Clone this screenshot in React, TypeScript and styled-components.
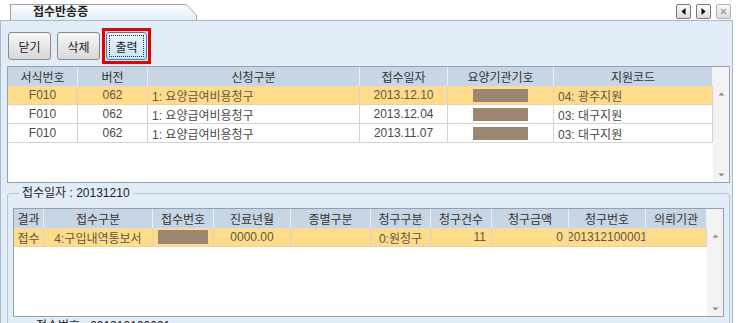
import React from 'react';
import styled, { createGlobalStyle } from 'styled-components';

const GlobalStyle = createGlobalStyle`
  html, body { margin: 0; padding: 0; background: #fff; }
  body {
    font-family: "Liberation Sans", "Noto Sans CJK KR", sans-serif;
    font-size: 12px;
    color: #333;
  }
  * { box-sizing: border-box; }
`;

const Screen = styled.div`
  width: 740px;
  height: 323px;
  overflow: hidden;
  background: #fff;
  display: flex;
  flex-direction: column;
`;

const TabStrip = styled.div`
  height: 20px;
  flex-shrink: 0;
  display: flex;
  align-items: flex-start;
  justify-content: space-between;
  padding: 4px 9px 0 10px;
`;

const TabOuter = styled.div`
  width: 187px;
  height: 16px;
  padding: 1px 1px 0 1px;
  background: #a3a3a3;
  clip-path: polygon(0 0, 176px 0, 187px 11px, 187px 100%, 0 100%);
`;

const TabInner = styled.div`
  height: 100%;
  background: linear-gradient(#fdfeff, #e4edf7);
  clip-path: polygon(0 0, 175px 0, 185px 10px, 185px 100%, 0 100%);
  padding-left: 22px;
  font-size: 12px;
  line-height: 15px;
  font-weight: bold;
  color: #222;
`;

const NavGroup = styled.div`
  display: flex;
  gap: 5px;
`;

const NavButton = styled.div<{ $disabled?: boolean }>`
  width: 15px;
  height: 15px;
  border: 1px solid ${p => (p.$disabled ? '#b0b0b0' : '#7a7a7a')};
  border-radius: 2px;
  background: linear-gradient(#fbfbfb, #dcdcdc);
  display: flex;
  align-items: center;
  justify-content: center;
`;

const Panel = styled.div`
  flex: 1;
  min-height: 0;
  margin-right: 7px;
  background: #e3edf7;
  border: 1px solid #a5b8cc;
  border-bottom: none;
  padding: 0 2px 0 6px;
  display: flex;
  flex-direction: column;
  overflow: hidden;
`;

const Toolbar = styled.div`
  height: 45px;
  flex-shrink: 0;
  display: flex;
  align-items: flex-start;
  gap: 6px;
  padding: 11px 0 0 1px;
`;

const ActionButton = styled.div<{ $focused?: boolean }>`
  width: ${p => (p.$focused ? 41 : 43)}px;
  height: 28px;
  border: 1px solid ${p => (p.$focused ? '#3c7fb1' : '#8a8a8a')};
  border-radius: 3px;
  background: ${p =>
    p.$focused
      ? 'linear-gradient(#e9f6fd, #c6e6f7)'
      : 'linear-gradient(#f8f8f8, #d8d8d8)'};
  display: flex;
  align-items: center;
  justify-content: center;
  font-size: 12px;
  color: #222;
  outline: ${p => (p.$focused ? '1px dotted #333' : 'none')};
  outline-offset: -4px;
`;

const Highlight = styled.div`
  margin: -4px 0 0 -4px;
  border: 3px solid #e80000;
  padding: 1px;
`;

const GridFrame = styled.div<{ $h: number }>`
  height: ${p => p.$h}px;
  flex-shrink: 0;
  border: 1px solid #8ea3bb;
  background: #fff;
  display: flex;
`;

const GridBody = styled.div`
  flex: 1;
  min-width: 0;
  display: flex;
  flex-direction: column;
`;

const Row = styled.div<{ $cols: string; $sel?: boolean; $head?: boolean }>`
  display: grid;
  grid-template-columns: ${p => p.$cols};
  height: 19px;
  flex-shrink: 0;
  background: ${p => (p.$head ? '#c8d5e4' : p.$sel ? '#ffdc8a' : '#fff')};
  color: ${p => (p.$head ? '#333' : p.$sel ? '#5e5848' : '#4a4a4a')};
`;

const HeadCell = styled.div`
  border-right: 1px solid #eaf0f6;
  display: flex;
  align-items: center;
  justify-content: center;
  white-space: nowrap;
  overflow: hidden;
`;

const Cell = styled.div<{ $align?: 'left' | 'center' | 'right' }>`
  border-right: 1px solid #d3d3d3;
  border-bottom: 1px solid #d3d3d3;
  display: flex;
  align-items: center;
  justify-content: ${p =>
    p.$align === 'left' ? 'flex-start' : p.$align === 'right' ? 'flex-end' : 'center'};
  padding: 0 ${p => (p.$align === 'right' ? 5 : p.$align === 'left' ? 4 : 0)}px 0
    ${p => (p.$align === 'left' ? 4 : 0)}px;
  white-space: nowrap;
  overflow: hidden;
`;

const Redacted = styled.span<{ $w: number; $h: number }>`
  display: block;
  width: ${p => p.$w}px;
  height: ${p => p.$h}px;
  background: #9c8571;
  flex-shrink: 0;
`;

const ScrollBar = styled.div`
  width: 16px;
  flex-shrink: 0;
  background: #f3f3f3;
  display: flex;
  flex-direction: column;
  padding-top: 19px;
`;

const ScrollButton = styled.div`
  height: 15px;
  display: flex;
  align-items: center;
  justify-content: center;
`;

const ScrollTrack = styled.div`
  flex: 1;
`;

const GroupBox = styled.fieldset`
  margin: 2px 0 0;
  padding: 0 5px;
  min-width: 0;
  border: 1px solid #b4c5d7;
  border-radius: 3px;
  flex-shrink: 0;
`;

const GroupLegend = styled.legend`
  margin-left: 6px;
  padding: 0 3px;
  line-height: 16px;
  font-size: 12px;
  color: #222;
`;

const InnerGrid = styled(GridFrame)`
  margin-top: 7px;
`;

const FooterLabel = styled.div`
  margin-top: 1px;
  padding-left: 23px;
  line-height: 16px;
  color: #222;
`;

const Tri = ({ dir, color = '#000' }: { dir: 'left' | 'right'; color?: string }) => (
  <svg width="7" height="7" viewBox="0 0 7 7">
    {dir === 'left' ? (
      <polygon points="5.5,0 5.5,7 1.5,3.5" fill={color} />
    ) : (
      <polygon points="1.5,0 1.5,7 5.5,3.5" fill={color} />
    )}
  </svg>
);

const CloseGlyph = () => (
  <svg width="7" height="7" viewBox="0 0 7 7">
    <path d="M1 1 L6 6 M6 1 L1 6" stroke="#9a9a9a" strokeWidth="1.2" />
  </svg>
);

const Arrow = ({ up }: { up?: boolean }) => (
  <svg width="7" height="4" viewBox="0 0 7 4">
    {up ? (
      <polygon points="0.5,3.5 6.5,3.5 3.5,0.5" fill="#8a8a8a" />
    ) : (
      <polygon points="0.5,0.5 6.5,0.5 3.5,3.5" fill="#8a8a8a" />
    )}
  </svg>
);

const Scroller = () => (
  <ScrollBar>
    <ScrollButton>
      <Arrow up />
    </ScrollButton>
    <ScrollTrack />
    <ScrollButton>
      <Arrow />
    </ScrollButton>
  </ScrollBar>
);

const topCols = '70px 70px 212px 88px 106px 159px';
const topHead = ['서식번호', '버전', '신청구분', '접수일자', '요양기관기호', '지원코드'];
const topRows = [
  { date: '2013.12.10', branch: '04: 광주지원', sel: true },
  { date: '2013.12.04', branch: '03: 대구지원' },
  { date: '2013.11.07', branch: '03: 대구지원' },
];

const botCols = '30px 109px 61px 77px 80px 60px 61px 77px 77px 61px';
const botHead = ['결과', '접수구분', '접수번호', '진료년월', '종별구분', '청구구분', '청구건수', '청구금액', '청구번호', '의뢰기관'];

export default function App() {
  return (
    <>
      <GlobalStyle />
      <Screen>
        <TabStrip>
          <TabOuter>
            <TabInner>접수반송증</TabInner>
          </TabOuter>
          <NavGroup>
            <NavButton>
              <Tri dir="left" />
            </NavButton>
            <NavButton>
              <Tri dir="right" />
            </NavButton>
            <NavButton $disabled>
              <CloseGlyph />
            </NavButton>
          </NavGroup>
        </TabStrip>
        <Panel>
          <Toolbar>
            <ActionButton>닫기</ActionButton>
            <ActionButton>삭제</ActionButton>
            <Highlight>
              <ActionButton $focused>출력</ActionButton>
            </Highlight>
          </Toolbar>

          <GridFrame $h={117}>
            <GridBody>
              <Row $cols={topCols} $head>
                {topHead.map(h => (
                  <HeadCell key={h}>{h}</HeadCell>
                ))}
              </Row>
              {topRows.map(r => (
                <Row $cols={topCols} $sel={r.sel} key={r.date}>
                  <Cell>F010</Cell>
                  <Cell>062</Cell>
                  <Cell $align="left">1: 요양급여비용청구</Cell>
                  <Cell>{r.date}</Cell>
                  <Cell>
                    <Redacted $w={55} $h={13} />
                  </Cell>
                  <Cell $align="left">{r.branch}</Cell>
                </Row>
              ))}
            </GridBody>
            <Scroller />
          </GridFrame>

          <GroupBox>
            <GroupLegend>접수일자 : 20131210</GroupLegend>
            <InnerGrid $h={109}>
              <GridBody>
                <Row $cols={botCols} $head>
                  {botHead.map(h => (
                    <HeadCell key={h}>{h}</HeadCell>
                  ))}
                </Row>
                <Row $cols={botCols} $sel>
                  <Cell>접수</Cell>
                  <Cell>4:구입내역통보서</Cell>
                  <Cell>
                    <Redacted $w={50} $h={14} />
                  </Cell>
                  <Cell>0000.00</Cell>
                  <Cell />
                  <Cell>0:원청구</Cell>
                  <Cell $align="right">11</Cell>
                  <Cell $align="right">0</Cell>
                  <Cell>201312100001</Cell>
                  <Cell />
                </Row>
              </GridBody>
              <Scroller />
            </InnerGrid>
            <FooterLabel>접수번호 : 201312100001</FooterLabel>
          </GroupBox>
        </Panel>
      </Screen>
    </>
  );
}
